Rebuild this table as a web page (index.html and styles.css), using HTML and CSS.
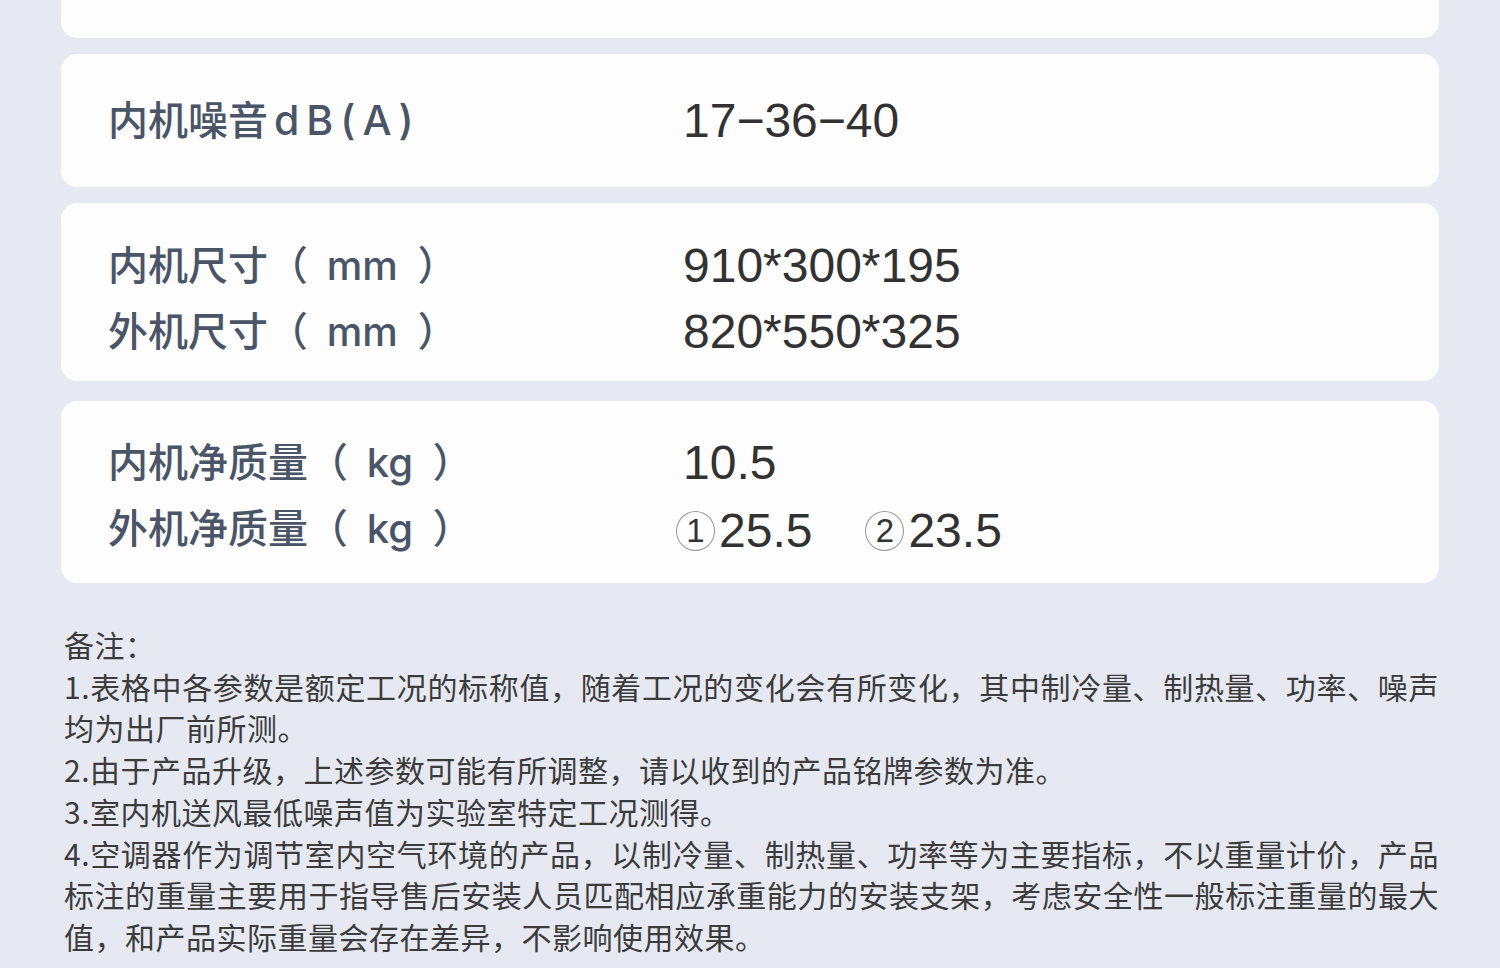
FILE: index.html
```html
<!DOCTYPE html>
<html lang="zh-CN">
<head>
<meta charset="utf-8">
<title>参数</title>
<link rel="stylesheet" href="styles.css">
</head>
<body>
<div class="page">
  <div class="cards">
    <div class="card card-cut"></div>

    <div class="card card-noise">
      <div class="row">
        <span class="label">内机噪音<span class="latin">dB(A)</span></span>
        <span class="value">17−36−40</span>
      </div>
    </div>

    <div class="card card-dim">
      <div class="row">
        <span class="label">内机尺寸（ <span class="unit">mm</span> ）</span>
        <span class="value">910*300*195</span>
      </div>
      <div class="row">
        <span class="label">外机尺寸（ <span class="unit">mm</span> ）</span>
        <span class="value">820*550*325</span>
      </div>
    </div>

    <div class="card card-weight">
      <div class="row">
        <span class="label">内机净质量（ <span class="unit">kg</span> ）</span>
        <span class="value">10.5</span>
      </div>
      <div class="row">
        <span class="label">外机净质量（ <span class="unit">kg</span> ）</span>
        <span class="value">
          <span class="opt"><span class="circ">1</span>25.5</span><span class="opt opt-2"><span class="circ">2</span>23.5</span>
        </span>
      </div>
    </div>
  </div>

  <div class="notes">
    <p>备注：</p>
    <p>1.表格中各参数是额定工况的标称值，随着工况的变化会有所变化，其中制冷量、制热量、功率、噪声均为出厂前所测。</p>
    <p>2.由于产品升级，上述参数可能有所调整，请以收到的产品铭牌参数为准。</p>
    <p>3.室内机送风最低噪声值为实验室特定工况测得。</p>
    <p>4.空调器作为调节室内空气环境的产品，以制冷量、制热量、功率等为主要指标，不以重量计价，产品标注的重量主要用于指导售后安装人员匹配相应承重能力的安装支架，考虑安全性一般标注重量的最大值，和产品实际重量会存在差异，不影响使用效果。</p>
  </div>
</div>
</body>
</html>
```

FILE: styles.css
```css
html, body {
  margin: 0;
  padding: 0;
  background: #e6e9f2;
}

body {
  width: 1500px;
  height: 968px;
  overflow: hidden;
  font-family: "Noto Sans CJK SC", "Noto Sans", sans-serif;
}

.page {
  display: flex;
  flex-direction: column;
}

.cards {
  display: flex;
  flex-direction: column;
  gap: 16px;
  padding: 0 61px;
}

.card {
  background: #fdfdfe;
  border-radius: 16px;
  padding: 34px 47px;
}

.card-cut {
  height: 38px;
  padding: 0;
  border-radius: 0 0 16px 16px;
}

.card-noise .row {
  line-height: 64px;
}

.card-dim {
  padding: 30px 47px 16px;
}

.card-dim .row {
  line-height: 66px;
}

.card-weight {
  margin-top: 4px;
  padding: 30px 47px 21px;
}

.card-weight .row {
  line-height: 63px;
}

.row {
  display: grid;
  grid-template-columns: 575px 1fr;
  align-items: center;
}

.label {
  font-family: "Inter", "Noto Sans CJK SC", sans-serif;
  font-size: 40px;
  font-weight: 500;
  color: #4a5567;
  white-space: nowrap;
}

.latin {
  font-size: 41px;
  letter-spacing: 7px;
  margin-left: 6px;
}

.unit {
  margin: 0 9px 0 8px;
}

.value {
  font-family: "Liberation Sans", Arial, sans-serif;
  font-size: 48px;
  color: #323232;
  white-space: nowrap;
}

.opt {
  display: inline-flex;
  align-items: center;
}

.opt-2 {
  margin-left: 60px;
}

.circ {
  display: inline-flex;
  align-items: center;
  justify-content: center;
  box-sizing: border-box;
  width: 39px;
  height: 40px;
  border: 1px solid #9a9a9a;
  border-radius: 50%;
  font-size: 33px;
  line-height: 1;
  color: #333;
  margin: 0 4px 0 -7px;
}

.notes {
  margin: 41px 0 0 64px;
  width: 1375px;
  font-size: 30px;
  letter-spacing: 0.5px;
  line-height: 41.7px;
  color: #3c3c3c;
  text-align: justify;
}

.notes p {
  margin: 0;
}
```
